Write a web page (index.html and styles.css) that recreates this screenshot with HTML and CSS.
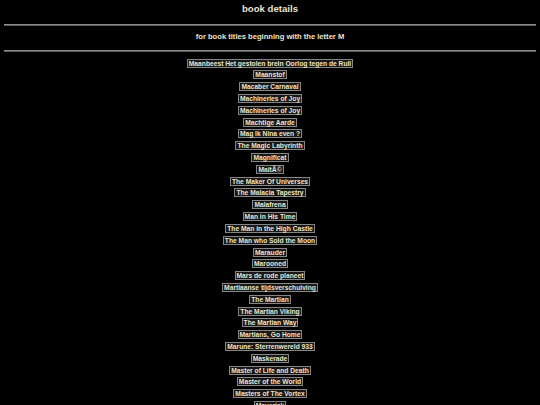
FILE: index.html
```html
<!DOCTYPE html>
<html>
<head>
<meta charset="utf-8">
<title>book details</title>
<link rel="stylesheet" href="styles.css">
</head>
<body>
<h1 class="title">book details</h1>
<hr class="rule">
<h2 class="subtitle">for book titles beginning with the letter M</h2>
<hr class="rule rule-lower">
<div class="list">
<span class="book">Maanbeest Het gestolen brein Oorlog tegen de Rull</span>
<span class="book">Maanstof</span>
<span class="book">Macaber Carnaval</span>
<span class="book">Machineries of Joy</span>
<span class="book">Machineries of Joy</span>
<span class="book">Machtige Aarde</span>
<span class="book">Mag Ik Nina even ?</span>
<span class="book">The Magic Labyrinth</span>
<span class="book">Magnificat</span>
<span class="book">MaitÃ©</span>
<span class="book">The Maker Of Universes</span>
<span class="book">The Malacia Tapestry</span>
<span class="book">Malafrena</span>
<span class="book">Man in His Time</span>
<span class="book">The Man in the High Castle</span>
<span class="book">The Man who Sold the Moon</span>
<span class="book">Marauder</span>
<span class="book">Marooned</span>
<span class="book">Mars de rode planeet</span>
<span class="book">Martiaanse tijdsverschuiving</span>
<span class="book">The Martian</span>
<span class="book">The Martian Viking</span>
<span class="book">The Martian Way</span>
<span class="book">Martians, Go Home</span>
<span class="book">Marune: Sterrenwereld 933</span>
<span class="book">Maskerade</span>
<span class="book">Master of Life and Death</span>
<span class="book">Master of the World</span>
<span class="book">Masters of The Vortex</span>
<span class="book">Maverick</span>
</div>
</body>
</html>
```
FILE: styles.css
```css
html, body {
  background: #000;
}
body {
  margin: 0 4px;
  color: #ece4cc;
  font-family: "Liberation Sans", Arial, sans-serif;
  font-weight: bold;
}
.title {
  margin: 0;
  padding-top: 3px;
  font-size: 9.6px;
  line-height: 12px;
  text-align: center;
}
.rule {
  margin: 9px 0 0;
  height: 0;
  border: 0;
  border-top: 1px solid #8c8c8c;
  border-bottom: 1px solid #5a5a5a;
}
.subtitle {
  margin: 0;
  padding-top: 6px;
  font-size: 7.6px;
  line-height: 10px;
  text-align: center;
}
.rule-lower {
  margin-top: 7.5px;
}
.list {
  display: flex;
  flex-direction: column;
  align-items: center;
  gap: 2.82px;
  padding-top: 7px;
}
.book {
  display: block;
  font-size: 6.7px;
  line-height: 7px;
  padding: 0 1px;
  border: 1px solid #858585;
  background: #181818;
  white-space: nowrap;
}
```
